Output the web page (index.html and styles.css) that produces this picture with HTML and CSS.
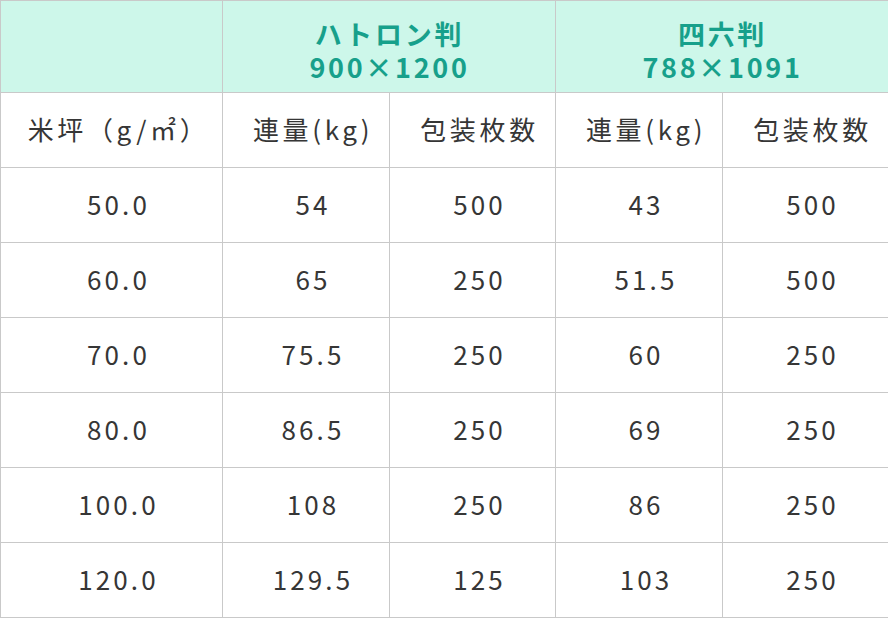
FILE: index.html
```html
<!DOCTYPE html>
<html lang="ja">
<head>
<meta charset="utf-8">
<link rel="stylesheet" href="styles.css">
</head>
<body>
<table class="spec">
  <colgroup>
    <col class="c-first"><col class="c-a"><col class="c-b"><col class="c-a"><col class="c-b">
  </colgroup>
  <thead>
    <tr class="row-head">
      <th class="head-blank"></th>
      <th class="head-size" colspan="2"><span class="line">ハトロン判</span><span class="line">900×1200</span></th>
      <th class="head-size" colspan="2"><span class="line">四六判</span><span class="line">788×1091</span></th>
    </tr>
    <tr class="row-sub">
      <th>米坪（g/㎡）</th>
      <th>連量(kg)</th>
      <th>包装枚数</th>
      <th>連量(kg)</th>
      <th>包装枚数</th>
    </tr>
  </thead>
  <tbody>
    <tr><td>50.0</td><td>54</td><td>500</td><td>43</td><td>500</td></tr>
    <tr><td>60.0</td><td>65</td><td>250</td><td>51.5</td><td>500</td></tr>
    <tr><td>70.0</td><td>75.5</td><td>250</td><td>60</td><td>250</td></tr>
    <tr><td>80.0</td><td>86.5</td><td>250</td><td>69</td><td>250</td></tr>
    <tr><td>100.0</td><td>108</td><td>250</td><td>86</td><td>250</td></tr>
    <tr><td>120.0</td><td>129.5</td><td>125</td><td>103</td><td>250</td></tr>
  </tbody>
</table>
</body>
</html>
```

FILE: styles.css
```css
html, body {
  margin: 0;
  padding: 0;
  background: #ffffff;
}

.spec {
  width: 888px;
  border-collapse: collapse;
  table-layout: fixed;
  font-family: "Noto Sans CJK JP", "Noto Sans", sans-serif;
  color: #363636;
}

.c-first { width: 222px; }
.c-a { width: 167px; }
.c-b { width: 166px; }

.spec th,
.spec td {
  border: 1px solid #c9c9c9;
  text-align: center;
  vertical-align: middle;
  padding: 0 0 3px 14px;
  font-size: 26px;
  font-weight: 400;
  letter-spacing: 0.12em;
  line-height: 1.2;
}

.row-sub th {
  height: 71px;
  letter-spacing: 0.14em;
}

.row-head th {
  height: 85px;
  background: #cdf7ea;
  color: #17a08b;
  font-weight: 700;
  font-size: 27px;
  letter-spacing: 0.1em;
  line-height: 33px;
  padding: 6px 0 0 1px;
}

.line {
  display: block;
}

.spec tbody td {
  height: 71px;
}
```
